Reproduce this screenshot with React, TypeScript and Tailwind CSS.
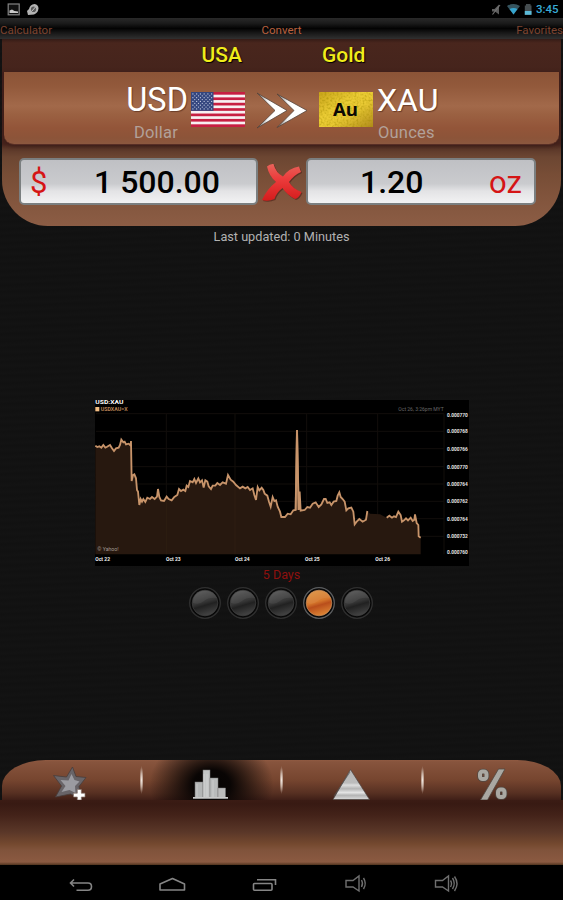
import React from "react";

type P = [number, number];

const line1: P[] = [[16,152],[22,156],[28,154],[34,158],[40,150],[46,158],[50,156],[60,150],[66,160],[72,168],[78,160],[86,158],[90,150],[94,134],[100,142],[104,140],[108,148],[116,146],[122,152],[123,138],[125,258],[129,240],[133,238],[138,250],[141,285],[144,290],[148,330],[152,312],[156,320],[160,312],[166,321],[172,308],[180,312],[186,306],[194,312],[201,305],[204,282],[208,306],[213,316],[222,318],[230,305],[236,312],[245,316],[253,306],[262,300],[267,282],[273,288],[280,284],[286,288],[290,272],[295,276],[300,258],[308,262],[313,252],[318,264],[325,250],[330,262],[336,256],[341,278],[346,256],[352,260],[356,274],[363,282],[368,272],[376,272],[382,264],[390,270],[398,262],[408,266],[414,240],[422,254],[430,260],[438,270],[450,280],[458,275],[466,280],[473,276],[480,285],[488,280],[493,300],[498,315],[503,276],[508,286],[515,278],[520,285],[524,296],[532,302],[537,320],[542,335],[548,306],[553,318],[558,316],[563,335],[570,350],[574,366],[585,366],[593,356],[602,358],[610,346],[617,345],[621,105],[626,345],[629,290],[632,347],[644,345],[652,336],[660,338],[668,326],[677,322],[686,336],[694,328],[702,312],[707,312],[712,324],[719,322],[724,330],[731,320],[739,318],[743,302],[748,292],[752,306],[758,312],[764,320],[769,346],[775,340],[784,338],[790,350],[794,388],[800,380],[808,372],[818,380],[828,374],[832,348]];
const line2: P[] = [[890,368],[898,362],[906,368],[912,364],[918,366],[925,350],[932,360],[936,380],[942,376],[948,370],[954,376],[962,368],[968,378],[973,374],[975,358],[980,384],[985,390],[986,424],[992,428]];
const str = (p: P[]) => p.map((q) => q.join(",")).join(" ");

const prices = ["0.000770", "0.000768", "0.000766", "0.000770", "0.000764", "0.000762", "0.000764", "0.000732", "0.000760"];
const priceY = [59, 109, 161, 215, 267, 319, 371, 424, 471];

function Chart() {
  return (
    <svg className="block h-[166px] w-[374px] overflow-visible" viewBox="15 15 1122 498" fontFamily="Roboto, sans-serif">
      <rect x="15" y="15" width="1122" height="498" fill="#000" />
      <g stroke="#120e0b" strokeWidth="3">
        {[56, 109, 161, 215, 267, 319, 371, 424].map((y) => <line key={y} x1="18" x2="1062" y1={y} y2={y} />)}
        {[229, 435, 650, 863, 1062].map((x) => <line key={x} x1={x} x2={x} y1="56" y2="478" />)}
      </g>
      <polygon points={`16,478 ${str(line1)} 840,356 870,358 ${str(line2)} 992,478`} fill="#27180f" />
      <g stroke="#3a2817" strokeWidth="2" opacity=".5">
        <line x1="229" x2="229" y1="320" y2="478" />
        <line x1="435" x2="435" y1="270" y2="478" />
      </g>
      <polyline points="617,345 621,105 626,345" fill="none" stroke="#9c7451" strokeWidth="6" />
      <polyline points={str(line1)} fill="none" stroke="#c8946a" strokeWidth="5.500" />
      <polyline points={str(line2)} fill="none" stroke="#c8946a" strokeWidth="5.500" />
      <text x="16" y="27" fontSize="17" fontWeight="700" fill="#fff" textLength="84" lengthAdjust="spacingAndGlyphs">USD:XAU</text>
      <rect x="16" y="36" width="12" height="13" fill="#f3bd83" />
      <text x="32" y="49" fontSize="17" fontWeight="700" fill="#b98355" textLength="81" lengthAdjust="spacingAndGlyphs">USDXAU=X</text>
      <text x="925" y="49" fontSize="17" fill="#686868" textLength="136" lengthAdjust="spacingAndGlyphs">Oct 26, 3:26pm MYT</text>
      <text x="22" y="469" fontSize="15" fill="#a39a92" textLength="64" lengthAdjust="spacingAndGlyphs">© Yahoo!</text>
      <g fontSize="14.500" fontWeight="700" fill="#e2e2e2">
        {prices.map((p, i) => <text key={i} x="1071" y={priceY[i] + 6}>{p}</text>)}
      </g>
      <g fontSize="17" fontWeight="700" fill="#eee">
        {["Oct 22", "Oct 23", "Oct 24", "Oct 25", "Oct 26"].map((d, i) => (
          <text key={d} x={[16, 228, 435, 645, 856][i]} y="498" textLength="44" lengthAdjust="spacingAndGlyphs">{d}</text>
        ))}
      </g>
    </svg>
  );
}

function UsFlag() {
  return (
    <svg className="h-[35px] w-[54px]" viewBox="0 0 54 35">
      <rect width="54" height="35" fill="#f7f0f2" />
      {[0, 1, 2, 3, 4, 5, 6].map((i) => <rect key={i} y={i * 5.385} width="54" height="2.69" fill="#c71f42" />)}
      <rect width="22.500" height="18.850" fill="#34467f" />
      {[0, 1, 2, 3, 4, 5, 6, 7, 8].map((r) =>
        (r % 2 ? [0, 1, 2, 3, 4] : [0, 1, 2, 3, 4, 5]).map((c) => (
          <circle key={`${r}-${c}`} cx={1.9 + c * 3.75 + (r % 2) * 1.87} cy={1.9 + r * 1.88} r=".62" fill="#c6cee3" />
        ))
      )}
    </svg>
  );
}

function Arrows() {
  return (
    <svg className="h-[38px] w-[52px]" viewBox="256 90 52 38">
      <defs>
        <linearGradient id="arrow" x1="0" x2="1" y1="0" y2="0">
          <stop offset="0" stopColor="#777" />
          <stop offset=".35" stopColor="#f4f4f4" />
          <stop offset=".5" stopColor="#fff" />
        </linearGradient>
      </defs>
      <path d="M257 92 L287 109.500 L257 127 L275 109.500Z" fill="url(#arrow)" stroke="#54423a" strokeWidth=".8" />
      <path d="M277 93 L307 109.500 L277 126.500 L294 109.500Z" fill="url(#arrow)" stroke="#54423a" strokeWidth=".8" />
    </svg>
  );
}

function GoldBar() {
  return (
    <svg className="h-[35px] w-[54px]" viewBox="0 0 54 35">
      <defs>
        <linearGradient id="gold" x1="0" y1="0" x2="1" y2="1">
          <stop offset="0" stopColor="#c9a41b" />
          <stop offset=".4" stopColor="#eccd35" />
          <stop offset=".6" stopColor="#e8c833" />
          <stop offset="1" stopColor="#b18b1c" />
        </linearGradient>
        <filter id="grain" x="0" y="0" width="100%" height="100%">
          <feTurbulence type="fractalNoise" baseFrequency=".5" numOctaves="2" seed="4" />
          <feColorMatrix values="0 0 0 0 .35  0 0 0 0 .25  0 0 0 0 0  1.200 0 0 0 -.5" />
        </filter>
      </defs>
      <rect width="54" height="35" fill="url(#gold)" />
      <rect width="54" height="35" filter="url(#grain)" />
      <text x="14" y="24" fontFamily="Open Sans, sans-serif" fontWeight="700" fontSize="18" fill="#0b0904" textLength="25" lengthAdjust="spacingAndGlyphs">Au</text>
    </svg>
  );
}

function Cross() {
  return (
    <svg className="h-[42px] w-[44px] shrink-0" viewBox="260 161 44 42">
      <defs>
        <linearGradient id="cross" x1="0" y1="0" x2="0" y2="1">
          <stop offset="0" stopColor="#e8635a" />
          <stop offset=".4" stopColor="#ec3c3c" />
          <stop offset="1" stopColor="#d41c1c" />
        </linearGradient>
      </defs>
      <path d="M267 166.500 Q270 163.500 273.500 164 Q276 173 283 176.500 Q289 168 299 166.500 L301 172 Q294 175 289 182 Q293 189 301.500 192 Q299 198 295 199 Q287 195 282.500 188 Q276 193 274.500 199 Q268 202 262 200 Q267 189 276 182 Q269 176 267 166.500Z" transform="translate(1 1)" fill="#4d2018" opacity=".6" />
      <path d="M267 166.500 Q270 163.500 273.500 164 Q276 173 283 176.500 Q289 168 299 166.500 L301 172 Q294 175 289 182 Q293 189 301.500 192 Q299 198 295 199 Q287 195 282.500 188 Q276 193 274.500 199 Q268 202 262 200 Q267 189 276 182 Q269 176 267 166.500Z" fill="url(#cross)" />
    </svg>
  );
}

function StatusBar() {
  return (
    <div className="flex h-[18px] items-center bg-black">
      <svg className="h-[18px] w-[42px]" viewBox="0 0 42 18">
        <rect x="8.200" y="4" width="11" height="10.800" fill="#111" stroke="#858585" strokeWidth="1.200" />
        <path d="M9.500 13 V10.500 L12 9.500 L14.500 11 L18 11.500 V13Z" fill="#c8c8c8" />
        <path d="M27 11 L29 9 Q30 4.500 34.500 4 Q38.500 4.500 38.500 8.500 Q38 13 34 14.500 L28 15Z" fill="#b3b3b3" />
        <ellipse cx="33.500" cy="9.200" rx="2.600" ry="2.800" fill="#5a5a5a" />
        <path d="M31.500 11.500 L35.500 7" stroke="#c6c6c6" strokeWidth="1" />
      </svg>
      <svg className="ml-auto h-[18px] w-[43px]" viewBox="490 0 43 18">
        <path d="M492 9 H494.500 L499 4.500 V14.500 L495 11.500 H492Z" fill="#5c5c5c" />
        <path d="M492.500 14.500 L500 5" stroke="#757575" strokeWidth="1.100" />
        <path d="M507 6 Q513.500 2 520 6 L513.500 14.500Z" fill="#35545f" />
        <path d="M509.500 9 Q513.500 7 517.500 9 L513.500 14.500Z" fill="#36a5cf" />
        <path d="M526 4 H530.500 V5.500 H531.500 V14.800 H524.800 V5.500 H526Z" fill="#454d50" />
        <rect x="524.800" y="11" width="6.700" height="3.800" fill="#5bbbd8" />
      </svg>
      <span className="w-[30px] pl-[3px] text-[11.500px] leading-[20px] font-medium text-[#38abd6]">3:45</span>
    </div>
  );
}

function Knob({ on }: { on?: boolean }) {
  return (
    <svg className="h-[34px] w-[34px]" viewBox="0 0 34 34">
      <defs>
        <linearGradient id="knobOff" x1=".3" y1="0" x2=".6" y2="1">
          <stop offset="0" stopColor="#555" />
          <stop offset=".46" stopColor="#363636" />
          <stop offset=".6" stopColor="#212121" />
          <stop offset="1" stopColor="#454545" />
        </linearGradient>
        <linearGradient id="knobOn" x1=".3" y1="0" x2=".6" y2="1">
          <stop offset="0" stopColor="#dc9140" />
          <stop offset=".45" stopColor="#d5772c" />
          <stop offset=".6" stopColor="#b94e1b" />
          <stop offset="1" stopColor="#df8735" />
        </linearGradient>
      </defs>
      <circle cx="17" cy="17" r="15.300" fill="#131313" stroke={on ? "#5c5e60" : "#303030"} strokeWidth="1.300" />
      <circle cx="17" cy="17" r="14.300" fill="#080808" />
      <circle cx="17" cy="17" r="12.800" fill={on ? "url(#knobOn)" : "url(#knobOff)"} stroke={on ? "#c98d5a" : "#414141"} strokeWidth=".7" />
      <path d="M5 17 Q11 19 16 15 T29 12 Q26 4.500 17 4.500 Q5 5 5 17Z" fill="#fff" opacity=".06" />
    </svg>
  );
}

const Divider = () => (
  <span className="my-auto h-[28px] w-[3px] shrink-0 bg-[radial-gradient(ellipse_2px_14px_at_center,#f4e9e2_0,#c9b3a6_45%,transparent_100%)]" />
);

function Toolbar() {
  return (
    <div className="h-[105px] shrink-0">
      <div className="mx-[2px] flex h-[40px] overflow-hidden rounded-t-[44px_26px] bg-[linear-gradient(to_bottom,#905a42_0,#87543d_2px,#76452f_20px,#573022_33px,#3f1f17_40px)]">
        <div className="flex flex-1 justify-center">
          <svg className="h-[40px] w-[40px]" viewBox="51.500 760 40 40">
            <path d="M73 767 L76.500 776.500 L86.500 777.500 L79.500 786.500 L82 799 L71 794 L56 797 L62 786 L54 775.500 L67 777Z" fill="#686468" stroke="#483c3b" strokeWidth=".8" />
            <path d="M72 774 L75 780 L80 781.500 L75.500 786 L76 793 L70 790 L62 792 L66 786 L61 780 L69 780.500Z" fill="#9b9ba1" />
            <path d="M77.800 789.500 H81.800 V793.200 H85.500 V797 H81.800 V800 H77.800 V797 H74 V793.200 H77.800Z" fill="#fff" stroke="#86736c" strokeWidth=".7" />
          </svg>
        </div>
        <Divider />
        <div className="flex flex-1 justify-center bg-[radial-gradient(ellipse_62px_50px_at_50%_62%,#050302_0,#090504_30%,transparent_100%)]">
          <svg className="h-[40px] w-[40px]" viewBox="191 760 40 40">
            <g stroke="#777" strokeWidth=".5">
              <rect x="195" y="782" width="8" height="16" fill="#b4b6b6" />
              <rect x="203" y="770" width="7" height="28" fill="#c3c5c5" />
              <rect x="210" y="778" width="8" height="20" fill="#b9bbbb" />
              <rect x="218" y="788" width="7.500" height="10" fill="#bbb" />
            </g>
            <path d="M204 774 V797 M207 774 V797 M213 780 V797 M197 784 V797" stroke="#ddd" strokeWidth="1" opacity=".5" />
            <rect x="193" y="797" width="35" height="1.700" fill="#c9c9c9" />
          </svg>
        </div>
        <Divider />
        <div className="flex flex-1 justify-center">
          <svg className="h-[40px] w-[40px]" viewBox="332 760 40 40">
            <defs>
              <linearGradient id="pyramid" x1="0" y1="0" x2="0" y2="1">
                <stop offset="0" stopColor="#b8b8b8" />
                <stop offset=".45" stopColor="#bcbcbc" />
                <stop offset=".52" stopColor="#ddd" />
                <stop offset=".64" stopColor="#b4b4b4" />
                <stop offset=".77" stopColor="#e4e4e4" />
                <stop offset=".86" stopColor="#b4b4b4" />
                <stop offset="1" stopColor="#dadada" />
              </linearGradient>
            </defs>
            <path d="M350.500 769.500 L369.500 799.500 H333Z" fill="url(#pyramid)" stroke="#4b4441" strokeWidth=".7" />
            <path d="M350 772 L334 796" stroke="#555" strokeWidth=".7" />
          </svg>
        </div>
        <Divider />
        <div className="flex flex-1 justify-center">
          <svg className="h-[40px] w-[40px]" viewBox="471.500 760 40 40">
            <g fill="none" stroke="#514943" strokeWidth="5.500">
              <rect x="479.500" y="771.500" width="6.500" height="7.500" rx="2.500" />
              <rect x="497.500" y="789.500" width="6.500" height="7.500" rx="2.500" />
            </g>
            <path d="M498 769 H504.500 L487 800 H480Z" fill="#aaa8a2" stroke="#514943" strokeWidth=".8" />
            <g fill="none" stroke="#aaa8a2" strokeWidth="4">
              <rect x="479.500" y="771.500" width="6.500" height="7.500" rx="2.500" />
              <rect x="497.500" y="789.500" width="6.500" height="7.500" rx="2.500" />
            </g>
          </svg>
        </div>
      </div>
      <div className="h-[65px] bg-[linear-gradient(to_bottom,#3b1c15_0,#381a13_4px,#432219_15px,#5a3728_32px,#74492f_44px,#80533b_50px,#8b5a41_62px,#50341f_65px)]" />
    </div>
  );
}

function NavBar() {
  return (
    <div className="h-[35px] bg-black">
      <svg className="block h-[35px] w-[563px]" viewBox="0 865 563 35" fill="none" stroke="#858585" strokeWidth="1.600">
        <path d="M74 879.500 L70.500 883 L74 886.500 M70.500 883 H88 Q91.500 883 91.500 886.500 Q91.500 890.200 88 890.200 H76.500" />
        <path d="M160 884 L172.500 878.500 L184.500 884 V890 H160Z" strokeLinejoin="round" />
        <path d="M257 879.800 H275.500 V885" />
        <rect x="253.500" y="883.500" width="18.500" height="6.800" rx="1" />
        <g stroke="#6f6f6f" strokeWidth="1.400">
          <path d="M346 880.500 H353 L359 876 V891 L353 887 H346Z" />
          <path d="M361.500 880 Q363.500 883.500 361.500 887 M363.500 878 Q367 883.500 363.500 889" />
          <path d="M435.500 880.500 H442.500 L448.500 876 V891 L442.500 887 H435.500Z" />
          <path d="M450.500 880.500 Q452.500 883.500 450.500 887 M452.500 878 Q456 883.500 452.500 889 M454.500 876.500 Q459.500 883.500 454.500 891" />
        </g>
      </svg>
    </div>
  );
}

const fieldClass =
  "flex h-[47px] shrink-0 items-center rounded-[5px] border-2 border-[#7b7f80] bg-[linear-gradient(to_bottom,#bfc0c4_0%,#cacbce_55%,#e3e3e5_72%,#f2f2f3_100%)]";

export default function App() {
  return (
    <div className="flex h-[900px] w-[563px] flex-col overflow-hidden bg-[#121212] bg-[repeating-linear-gradient(178deg,#121212_0px,#131313_2px,#111111_5px,#121212_7px)] font-[Roboto,sans-serif]">
      <StatusBar />
      <div className="flex h-[21px] shrink-0 items-center justify-between bg-[linear-gradient(to_bottom,#292929_0,#1b1b1b_25%,#030303_50%,#171717_70%,#303030_100%)] text-[11.500px] leading-[24px]">
        <span className="w-[100px] pt-[2px] text-[#7c432f]">Calculator</span>
        <span className="pt-[2px] text-[#b9603e]">Convert</span>
        <span className="w-[100px] pt-[2px] text-right text-[#7c432f]">Favorites</span>
      </div>

      <div className="mx-[2px] flex h-[187px] shrink-0 flex-col rounded-b-[46px] bg-[linear-gradient(to_bottom,#351b16_0,#49261d_4px,#45241c_32px,#421e1b_34px,#47231c_105px,#5c3829_110px,#6c4632_118px,#774d36_135px,#82553d_160px,#8c5d45_187px)]">
        <div className="flex h-[33px] items-center text-[21px] leading-[33px] font-medium text-[#f0ed1b] [text-shadow:1px_1px_1px_#000]">
          <span className="ml-[199.500px] w-[120.500px]">USA</span>
          <span>Gold</span>
        </div>
        <div className="mx-[2px] flex h-[73px] rounded-b-[10px] border-b border-[#582e25] bg-[linear-gradient(to_bottom,#8b5437_0,#92593b_14px,#a2694a_34px,#9b6142_42px,#935539_56px,#8c5439_66px,#8c583f_72px)] shadow-[0_1px_4px_#3b1d18]">
          <div className="flex w-[184px] flex-col items-end pt-[12px]">
            <span className="text-[32.500px] leading-[33px] text-white [text-shadow:1px_1px_1px_#6b3d29]">USD</span>
            <span className="mr-[10px] text-[16.500px] leading-[32px] tracking-[0.2px] text-[#b2a199]">Dollar</span>
          </div>
          <div className="flex items-start pt-[20px] pl-[3px]">
            <UsFlag />
            <div className="-mt-[1px] ml-[11px]"><Arrows /></div>
            <div className="ml-[11px]"><GoldBar /></div>
          </div>
          <div className="flex flex-col pt-[12px] pl-[4px]">
            <span className="text-[32px] leading-[33px] text-white [text-shadow:1px_1px_1px_#6b3d29]">XAU</span>
            <span className="pl-[1px] text-[16.500px] leading-[32px] tracking-[0.2px] text-[#b2a199]">Ounces</span>
          </div>
        </div>
        <div className="flex items-center pt-[13px] pl-[17px]">
          <div className={`${fieldClass} w-[239px]`}>
            <span className="ml-[9px] w-[64px] pt-[2px] text-[31px] leading-[41px] text-[#d51515]">$</span>
            <span className="pt-[2px] text-[32px] leading-[41px] font-medium whitespace-nowrap text-black">1 500.00</span>
          </div>
          <div className="ml-[2px]"><Cross /></div>
          <div className={`${fieldClass} ml-[2px] w-[230px]`}>
            <span className="ml-[52px] w-[129px] pt-[2px] text-[32px] leading-[41px] font-medium text-black">1.20</span>
            <span className="pt-[2px] text-[31px] leading-[41px] text-[#d51515]">oz</span>
          </div>
        </div>
      </div>

      <div className="h-[174px] shrink-0 pt-[3px] text-center text-[12.700px] leading-[16px] text-[#b2b2b2]">Last updated: 0 Minutes</div>

      <div className="flex flex-1 flex-col items-center">
        <Chart />
        <div className="h-[20px] text-[12.500px] leading-[18px] text-[#8e100e]">5 Days</div>
        <div className="mr-[2px] flex gap-[4px]">
          <Knob />
          <Knob />
          <Knob />
          <Knob on />
          <Knob />
        </div>
      </div>

      <Toolbar />
      <NavBar />
    </div>
  );
}
